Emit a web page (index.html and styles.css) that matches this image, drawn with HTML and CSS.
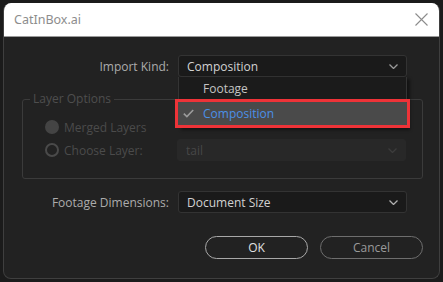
FILE: index.html
```html
<!DOCTYPE html>
<html>
<head>
<meta charset="utf-8">
<link rel="stylesheet" href="styles.css">
</head>
<body>
<div class="dialog">
  <div class="titlebar">
    <span class="title">CatInBox.ai</span>
    <svg class="close" width="13" height="13" viewBox="0 0 13 13"><path d="M0.5 0.5L12.5 12.5M12.5 0.5L0.5 12.5" stroke="#8c8c8c" stroke-width="1.1" fill="none"/></svg>
  </div>
  <div class="content">
    <div class="row first">
      <label class="label">Import Kind:</label>
      <div class="select-wrap">
        <div class="select">
          <span>Composition</span>
          <svg class="chev" width="9" height="5" viewBox="0 0 9 5"><path d="M0.5 0.5L4.5 4.5L8.5 0.5" stroke="#9a9a9a" stroke-width="1.3" fill="none"/></svg>
        </div>
        <div class="menu">
          <div class="item">Footage</div>
          <div class="item selected">
            <svg class="check" width="11" height="9" viewBox="0 0 11 9"><path d="M0.8 4.6L3.9 7.6L10.2 1" stroke="#9b9b9b" stroke-width="1.6" fill="none"/></svg>
            <span>Composition</span>
          </div>
        </div>
      </div>
    </div>

    <fieldset class="group">
      <legend>Layer Options</legend>
      <div class="opt">
        <span class="radio filled"></span>
        <span class="opt-label">Merged Layers</span>
      </div>
      <div class="opt">
        <div class="opt-left">
          <span class="radio hollow"></span>
          <span class="opt-label">Choose Layer:</span>
        </div>
        <div class="select disabled">
          <span>tail</span>
          <svg class="chev" width="9" height="5" viewBox="0 0 9 5"><path d="M0.5 0.5L4.5 4.5L8.5 0.5" stroke="#3c3c3c" stroke-width="1.3" fill="none"/></svg>
        </div>
      </div>
    </fieldset>

    <div class="row dims">
      <label class="label">Footage Dimensions:</label>
      <div class="select-wrap">
        <div class="select">
          <span>Document Size</span>
          <svg class="chev" width="9" height="5" viewBox="0 0 9 5"><path d="M0.5 0.5L4.5 4.5L8.5 0.5" stroke="#b0b0b0" stroke-width="1.3" fill="none"/></svg>
        </div>
      </div>
    </div>

    <div class="buttons">
      <button class="btn ok">OK</button>
      <button class="btn cancel">Cancel</button>
    </div>
  </div>
</div>
</body>
</html>
```
FILE: styles.css
```css
* { box-sizing: border-box; }
html, body {
  margin: 0;
  padding: 0;
  background: #1b1b1b;
  width: 443px;
  height: 282px;
  overflow: hidden;
}
body {
  padding: 3px 3px 0 3px;
  font-family: "Open Sans", "Noto Sans", sans-serif;
  font-size: 12px;
}
.dialog {
  width: 437px;
  height: 276px;
  border-radius: 8px;
  background: #222222;
  border: 1px solid #3f3f3f;
  border-top: none;
  overflow: hidden;
  display: flex;
  flex-direction: column;
}
.titlebar {
  height: 34px;
  background: #ffffff;
  border-bottom: 1px solid #9a9a9a;
  display: flex;
  align-items: center;
  justify-content: space-between;
  padding: 0 10px 0 10px;
  flex-shrink: 0;
}
.title {
  font-family: "Noto Sans", "Open Sans", sans-serif;
  font-size: 12.5px;
  color: #8d8d8d;
  margin-top: -1px;
}
.close { margin-right: 1px; margin-top: -1px; }
.content {
  flex: 1;
  display: flex;
  flex-direction: column;
  padding: 18px 0 0 0;
}
.row {
  display: flex;
  align-items: center;
}
.label {
  width: 165px;
  text-align: right;
  color: #acacac;
  margin-right: 9px;
}
.select-wrap {
  position: relative;
  width: 229px;
}
.select {
  height: 22px;
  width: 229px;
  background: #1a1a1a;
  border: 1px solid #333333;
  border-radius: 3px;
  display: flex;
  align-items: center;
  justify-content: space-between;
  padding: 0 8px 0 8px;
  color: #d2d2d2;
}
.menu {
  position: absolute;
  top: 22px;
  left: 0;
  width: 229px;
  background: #1b1b1b;
  border: 1px solid #343434;
  border-top: none;
  box-shadow: 3px 2px 3px rgba(0,0,0,0.45);
  z-index: 5;
}
.item {
  height: 22px;
  display: flex;
  align-items: center;
  padding-left: 24px;
  color: #c4c4c4;
}
.item.selected {
  height: 29px;
  margin: 0 -4px -1px -4px;
  border: 3px solid #ee3338;
  background: #4a4a4a;
  color: #4a90e8;
  padding-left: 5px;
}
.check { margin-right: 9px; }
.group {
  margin: 15px 0 0 18px;
  width: 401px;
  height: 87px;
  border: 1px solid #3b3b3b;
  border-radius: 3px;
  padding: 10px 0 0 0;
  display: flex;
  flex-direction: column;
}
.group legend {
  color: #4e4e4e;
  padding: 0 3px;
  margin-left: 7px;
  line-height: 14px;
}
.opt {
  display: flex;
  align-items: center;
  height: 22px;
  padding-left: 22px;
}
.opt + .opt { margin-top: 1px; }
.opt-left {
  width: 132px;
  display: flex;
  align-items: center;
}
.radio {
  width: 14px;
  height: 14px;
  border-radius: 50%;
  margin-right: 5px;
  flex-shrink: 0;
}
.radio.filled { background: #444444; }
.radio.hollow { border: 2px solid #4a4a4a; }
.opt-label { color: #4b4b4b; }
.select.disabled {
  background: #282828;
  border-color: #282828;
  color: #474747;
}
.dims { margin-top: 12px; }
.buttons {
  display: flex;
  justify-content: flex-end;
  gap: 12px;
  padding-right: 16px;
  margin-top: 23px;
}
.btn {
  width: 103px;
  height: 23px;
  border-radius: 12px;
  background: #222222;
  font-family: "Open Sans", "Noto Sans", sans-serif;
  font-size: 12px;
  padding: 0;
}
.btn.ok {
  border: 1.5px solid #a8a8a8;
  color: #e0e0e0;
}
.btn.cancel {
  border: 1.5px solid #6e6e6e;
  color: #9a9a9a;
}
```
